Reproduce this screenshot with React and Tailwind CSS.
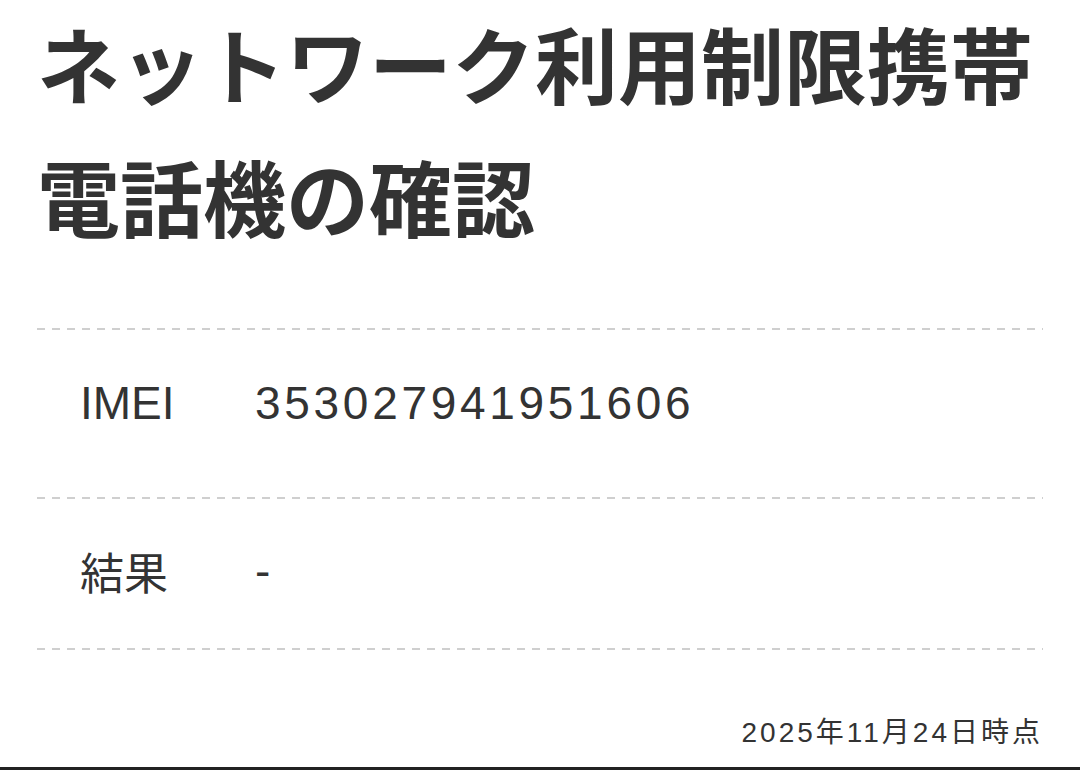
export default function App() {
  const dash =
    "h-[2px] mx-[37px] bg-[linear-gradient(to_right,#cfcfcf_55%,transparent_55%)] bg-[length:15px_2px] bg-repeat-x";

  return (
    <div className="w-[1080px] h-[770px] bg-white text-[#333] flex flex-col font-['Liberation_Sans','Noto_Sans_CJK_JP',sans-serif] overflow-hidden">
      {/* Title */}
      <h1 className="-mt-[4px] pl-[37px] text-[83px] leading-[133px] font-bold whitespace-nowrap font-['Noto_Sans_CJK_JP',sans-serif]">
        ネットワーク利用制限携帯
        <br />
        電話機の確認
      </h1>

      <div className="h-[66px]"></div>
      <div className={dash}></div>

      {/* IMEI row */}
      <div className="flex items-center h-[167px] pb-[22px] pl-[80px]">
        <div className="w-[175px] text-[46px] leading-[60px]">IMEI</div>
        <div className="text-[46px] leading-[60px] tracking-[3.7px]">353027941951606</div>
      </div>
      <div className={dash}></div>

      {/* Result row */}
      <div className="flex items-center h-[149px] pb-[6px] pl-[80px]">
        <div className="w-[175px] text-[44px] leading-[60px] font-['Noto_Sans_CJK_JP',sans-serif]">結果</div>
        <div className="text-[46px] leading-[60px]">-</div>
      </div>
      <div className={dash}></div>

      {/* Date */}
      <div className="flex-1 flex justify-end items-center pr-[37px] pt-[48px]">
        <span className="text-[28px] leading-[40px] tracking-[3px]">2025年11月24日時点</span>
      </div>
      <div className="h-[3px] bg-[#222]"></div>
    </div>
  );
}
